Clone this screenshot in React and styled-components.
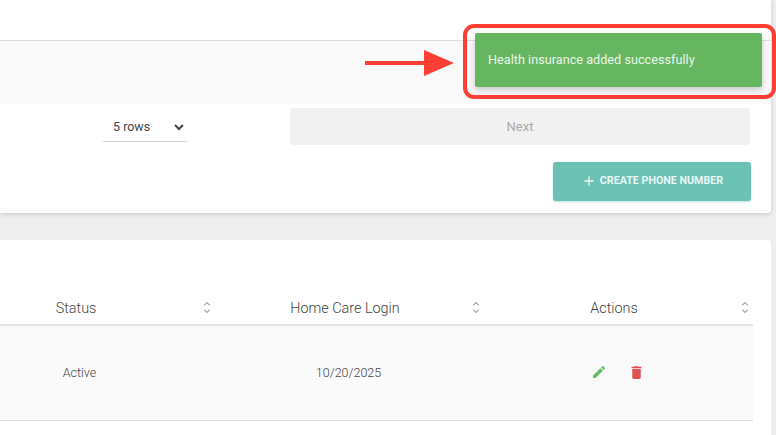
import styled, { createGlobalStyle } from "styled-components";
import { MdEdit, MdDelete, MdAdd } from "react-icons/md";

const GlobalStyle = createGlobalStyle`
    html, body {
        margin: 0;
        padding: 0;
        background: #eeeeee;
        font-family: Roboto, "Liberation Sans", sans-serif;
    }
`;

const SortIcon = () => (
    <svg width="8" height="13" viewBox="0 0 8 13" fill="none" stroke="#a2a2a2" strokeWidth="1.1">
        <path d="M1.2 4.4 L4 1.6 L6.8 4.4" />
        <path d="M1.2 8.6 L4 11.4 L6.8 8.6" />
    </svg>
);

const App = () => {
    const columns = ["Status", "Home Care Login", "Actions"];

    return (
        <>
            <GlobalStyle />
            <Page>
                <TopCard>
                    <TopSpacer />
                    <GrayRow />
                    <Pager>
                        <RowsCell>
                            <RowsSelect defaultValue="5">
                                <option value="5">5 rows</option>
                            </RowsSelect>
                        </RowsCell>
                        <NextButton disabled>Next</NextButton>
                    </Pager>
                    <ButtonRow>
                        <CreateButton>
                            <MdAdd size={16} />
                            CREATE PHONE NUMBER
                        </CreateButton>
                    </ButtonRow>
                </TopCard>

                <TableCard>
                    <Table>
                        <HeadRow>
                            {columns.map((column) => (
                                <HeadCell key={column}>
                                    <span>{column}</span>
                                    <SortIcon />
                                </HeadCell>
                            ))}
                        </HeadRow>
                        <BodyRow>
                            <BodyCell>Active</BodyCell>
                            <BodyCell>10/20/2025</BodyCell>
                            <BodyCell>
                                <IconButton $color="#66bb6a">
                                    <MdEdit size={16} />
                                </IconButton>
                                <IconButton $color="#e05252">
                                    <MdDelete size={17} />
                                </IconButton>
                            </BodyCell>
                        </BodyRow>
                    </Table>
                </TableCard>

                <Arrow width="90" height="32" viewBox="0 0 90 32">
                    <path d="M0 14 H59 V3 L89 16 L59 29 V18 H0 Z" fill="#ff3f34" />
                </Arrow>
                <Highlight />
                <Toast>Health insurance added successfully</Toast>
            </Page>
        </>
    );
};

export default App;

const Page = styled.div`
    position: relative;
    width: 776px;
    height: 435px;
    overflow: hidden;
    background: #eeeeee;
`;

const TopCard = styled.section`
    width: 771px;
    height: 213px;
    background: #fff;
    border-bottom-right-radius: 4px;
    box-shadow: 0 1px 4px rgba(0, 0, 0, 0.16);
`;

const TopSpacer = styled.div`
    height: 40px;
    border-bottom: 1px solid #dddddd;
`;

const GrayRow = styled.div`
    height: 63px;
    background: #f9f9f9;
`;

const Pager = styled.div`
    display: flex;
    align-items: center;
    height: 37px;
    margin-top: 4px;
    padding-right: 21px;
`;

const RowsCell = styled.div`
    width: 290px;
    padding-left: 103px;
    box-sizing: border-box;
`;

const RowsSelect = styled.select`
    width: 84px;
    height: 30px;
    padding: 0 6px 0 6px;
    border: none;
    border-bottom: 1px solid #d4d4d4;
    background: transparent;
    color: #444444;
    font-family: inherit;
    font-size: 12.5px;
    outline: none;
`;

const NextButton = styled.button`
    flex: 1;
    height: 37px;
    border: none;
    border-radius: 3px;
    background: #f1f1f1;
    color: #aaaaaa;
    font-family: inherit;
    font-size: 13px;
`;

const ButtonRow = styled.div`
    display: flex;
    justify-content: flex-end;
    margin-top: 17px;
    padding-right: 20px;
`;

const CreateButton = styled.button`
    display: flex;
    align-items: center;
    justify-content: center;
    gap: 3px;
    width: 198px;
    height: 39px;
    padding: 0 0 2px;
    border: none;
    border-radius: 3px;
    background: #6bc1b4;
    color: #e8f6f4;
    font-family: inherit;
    font-size: 10.7px;
    font-weight: 700;
    box-shadow: 0 1px 2px rgba(107, 193, 180, 0.45);
`;

const TableCard = styled.section`
    width: 771px;
    height: 210px;
    margin-top: 27px;
    overflow: hidden;
    background: #fff;
    border-top-right-radius: 4px;
    border-bottom-right-radius: 4px;
`;

const Table = styled.div`
    width: 807px;
    margin: 0 0 0 -54px;
    padding-top: 51px;
`;

const HeadRow = styled.div`
    display: grid;
    grid-template-columns: repeat(3, 269px);
    height: 33px;
    border-bottom: 2px solid #e4e4e4;
`;

const HeadCell = styled.div`
    position: relative;
    display: flex;
    align-items: center;
    justify-content: center;
    padding: 2px 9px 0 0;
    color: #444444;
    font-size: 14.4px;
    font-weight: 300;

    svg {
        position: absolute;
        right: 4px;
        top: 10px;
    }
`;

const BodyRow = styled.div`
    display: grid;
    grid-template-columns: repeat(3, 269px);
    height: 94px;
    background: #fafafa;
    border-bottom: 1px solid #dddddd;
`;

const BodyCell = styled.div`
    display: flex;
    align-items: center;
    justify-content: center;
    gap: 21px;
    padding: 0 2px 2px 0;
    color: #444444;
    font-size: 12.5px;
    font-weight: 300;
`;

const IconButton = styled.span`
    display: flex;
    color: ${(props) => props.$color};
`;

const Arrow = styled.svg`
    position: absolute;
    left: 365px;
    top: 47px;
`;

const Highlight = styled.div`
    position: absolute;
    left: 463px;
    top: 24px;
    width: 313px;
    height: 75px;
    box-sizing: border-box;
    border: 4px solid #ff3f34;
    border-radius: 11px;
`;

const Toast = styled.div`
    position: absolute;
    left: 475px;
    top: 33px;
    display: flex;
    align-items: center;
    width: 287px;
    height: 54px;
    padding: 0 0 1px 13px;
    box-sizing: border-box;
    border-radius: 2px;
    background: #66b661;
    color: #e9f5e8;
    font-size: 12.7px;
    box-shadow: 0 3px 6px rgba(0, 0, 0, 0.2);
`;
